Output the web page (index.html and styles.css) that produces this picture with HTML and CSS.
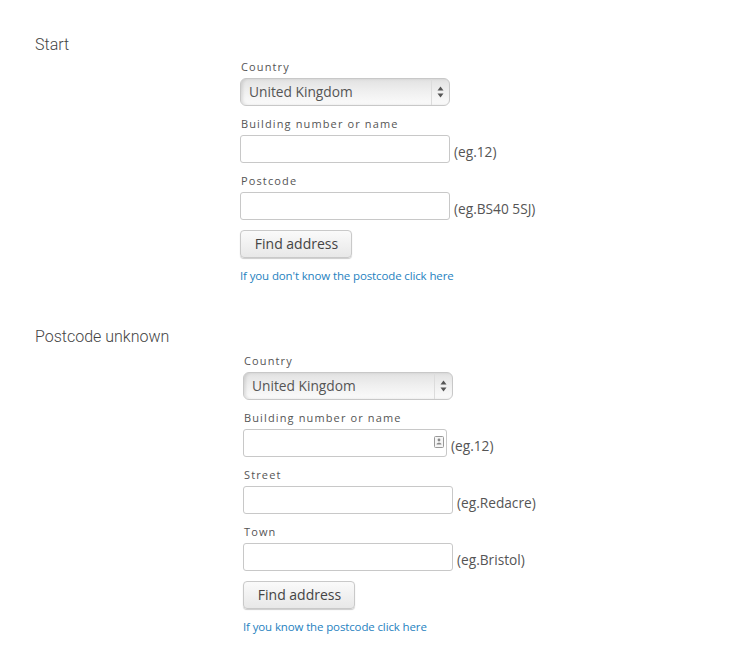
FILE: index.html
```html
<!DOCTYPE html>
<html>
<head>
    <title>Find address</title>
    <link rel="stylesheet" href="styles.css">
</head>
<body>
    <section class="step step-start">
        <h2 class="step-title">Start</h2>
        <form class="address-form">
            <div class="field">
                <label class="field-label">Country</label>
                <div class="select-box">
                    <span class="select-value">United Kingdom</span>
                    <span class="select-arrows">
                        <svg width="7" height="12" viewBox="0 0 7 12"><path d="M3.5 0.5L6.5 4.5H0.5Z M3.5 11.5L0.5 7.5H6.5Z" fill="#555"/></svg>
                    </span>
                </div>
            </div>
            <div class="field">
                <label class="field-label">Building number or name</label>
                <div class="field-row">
                    <input class="text-input" type="text">
                    <span class="hint">(eg.12)</span>
                </div>
            </div>
            <div class="field">
                <label class="field-label">Postcode</label>
                <div class="field-row">
                    <input class="text-input" type="text">
                    <span class="hint">(eg.BS40 5SJ)</span>
                </div>
            </div>
            <button class="find-btn" type="button">Find address</button>
            <a class="switch-link" href="#">If you don't know the postcode click here</a>
        </form>
    </section>

    <section class="step step-unknown">
        <h2 class="step-title">Postcode unknown</h2>
        <form class="address-form">
            <div class="field">
                <label class="field-label">Country</label>
                <div class="select-box">
                    <span class="select-value">United Kingdom</span>
                    <span class="select-arrows">
                        <svg width="7" height="12" viewBox="0 0 7 12"><path d="M3.5 0.5L6.5 4.5H0.5Z M3.5 11.5L0.5 7.5H6.5Z" fill="#555"/></svg>
                    </span>
                </div>
            </div>
            <div class="field">
                <label class="field-label">Building number or name</label>
                <div class="field-row">
                    <div class="input-wrap">
                        <input class="text-input" type="text">
                        <svg class="contact-icon" width="10" height="12" viewBox="0 0 10 12">
                            <rect x="0.5" y="0.5" width="9" height="11" rx="1" fill="#f6f6f6" stroke="#999"/>
                            <circle cx="5" cy="4" r="1.4" fill="#888"/>
                            <path d="M2.5 8.6C2.5 6.2 7.5 6.2 7.5 8.6Z" fill="#888"/>
                        </svg>
                    </div>
                    <span class="hint">(eg.12)</span>
                </div>
            </div>
            <div class="field">
                <label class="field-label">Street</label>
                <div class="field-row">
                    <input class="text-input" type="text">
                    <span class="hint">(eg.Redacre)</span>
                </div>
            </div>
            <div class="field">
                <label class="field-label">Town</label>
                <div class="field-row">
                    <input class="text-input" type="text">
                    <span class="hint">(eg.Bristol)</span>
                </div>
            </div>
            <button class="find-btn" type="button">Find address</button>
            <a class="switch-link" href="#">If you know the postcode click here</a>
        </form>
    </section>
</body>
</html>
```

FILE: styles.css
```css
body {
    margin: 0;
    padding: 0 0 0 35px;
    background: #fff;
    color: #555;
    font-family: "Open Sans", Arial, sans-serif;
}

.step-start {
    padding-top: 36px;
}

.step-unknown {
    padding-top: 44px;
}

.step-title {
    margin: 0;
    font-family: Roboto, "Liberation Sans", Arial, sans-serif;
    font-size: 16px;
    font-weight: 300;
    line-height: 18px;
    color: #444;
}

.address-form {
    display: flex;
    flex-direction: column;
    align-items: flex-start;
    margin-left: 205px;
    padding-top: 4px;
}

.step-unknown .address-form {
    margin-left: 208px;
    padding-top: 6px;
}

.field {
    margin-bottom: 9px;
}

.field-label {
    display: block;
    height: 20px;
    padding-left: 1px;
    font-size: 11px;
    line-height: 17px;
    letter-spacing: 1.13px;
    color: #555;
}

.field-row {
    display: flex;
    align-items: flex-end;
}

.select-box {
    display: flex;
    align-items: stretch;
    box-sizing: border-box;
    width: 210px;
    height: 28px;
    border: 1px solid #c8c8c8;
    border-radius: 6px;
    background: linear-gradient(#e2e2e2, #f0f0f0 50%, #fbfbfb);
    box-shadow: inset 2px 0 3px rgba(0,0,0,0.1);
}

.select-value {
    flex: 1;
    padding-left: 8px;
    font-size: 13.75px;
    line-height: 25px;
    color: #555;
}

.select-arrows {
    display: flex;
    align-items: center;
    justify-content: center;
    width: 17px;
    border-left: 1px solid #dcdcdc;
}

.text-input {
    display: block;
    box-sizing: border-box;
    width: 210px;
    height: 28px;
    margin: 0;
    padding: 0 6px;
    border: 1px solid #c8c8c8;
    border-radius: 3px;
    background: #fff;
}

.input-wrap {
    position: relative;
}

.input-wrap .text-input {
    width: 204px;
}

.contact-icon {
    position: absolute;
    top: 7px;
    right: 3px;
}

.hint {
    margin-left: 4px;
    font-size: 13.7px;
    line-height: 22px;
    color: #555;
}

.find-btn {
    display: block;
    box-sizing: border-box;
    width: 112px;
    height: 28px;
    margin: 1px 0 0;
    padding: 0 0 2px 1px;
    border: 1px solid #c9c9c9;
    border-radius: 4px;
    background: linear-gradient(#fafafa, #e8e8e8);
    box-shadow: 0 1px 1px rgba(0,0,0,0.2);
    font-family: "Open Sans", Arial, sans-serif;
    font-size: 14px;
    color: #444;
}

.switch-link {
    margin-top: 9px;
    font-size: 11.5px;
    line-height: 17px;
    letter-spacing: -0.13px;
    color: #1f82c0;
    text-decoration: none;
}
```
